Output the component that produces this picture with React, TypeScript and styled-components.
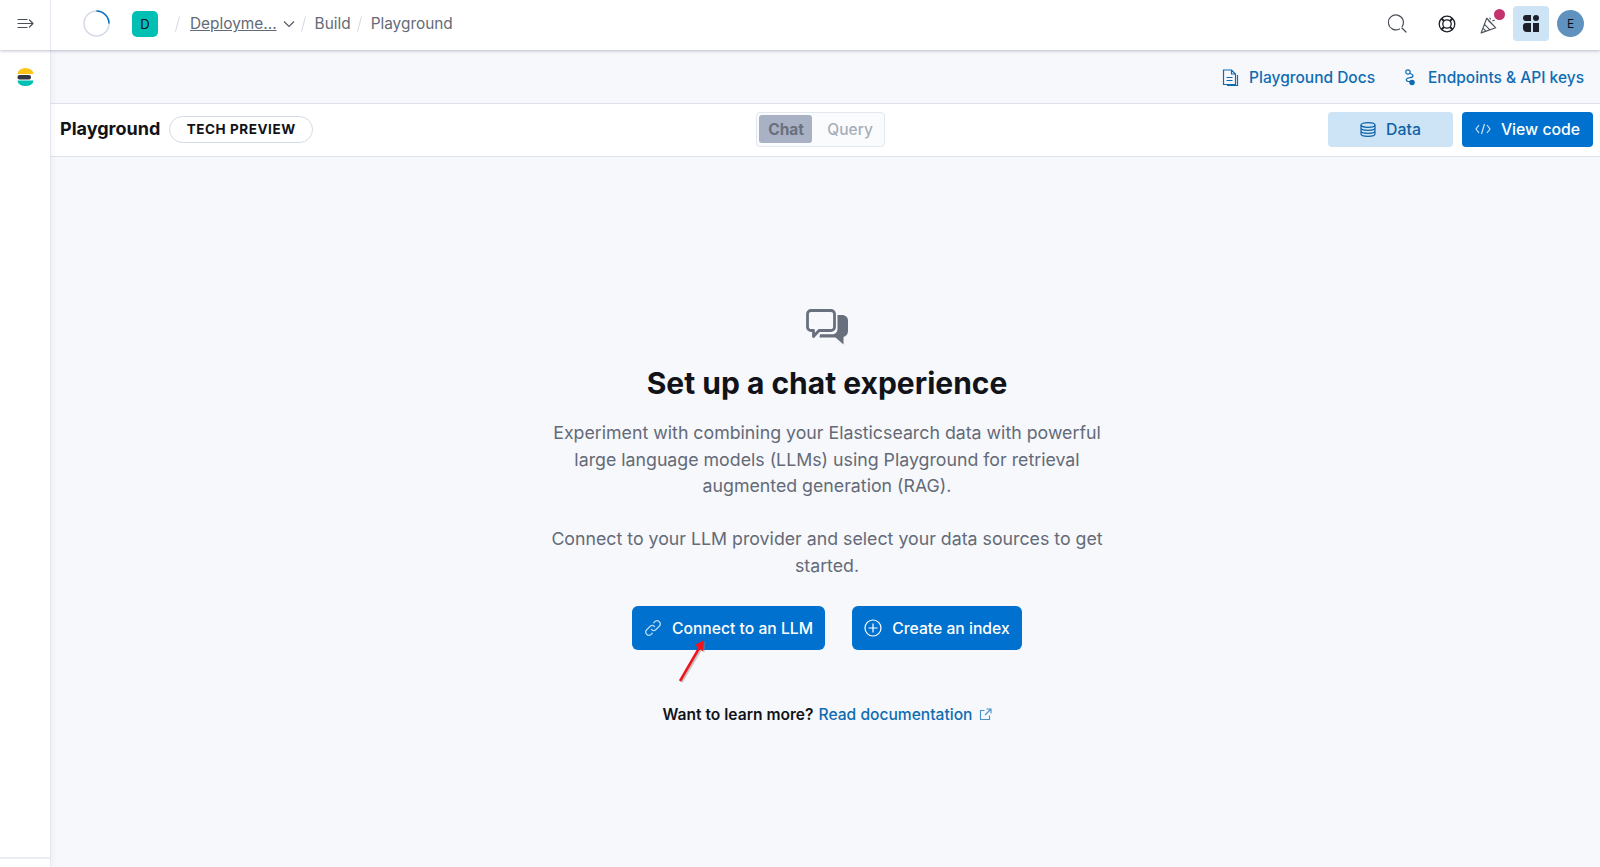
import React from "react";
import styled, { createGlobalStyle } from "styled-components";

const Global = createGlobalStyle`
  html, body { margin: 0; padding: 0; background: #f6f7fb; }
  body { font-family: Inter, "Noto Sans", sans-serif; color: #111; }
  * { box-sizing: border-box; }
`;

const Page = styled.div`
  width: 1600px; height: 867px; overflow: hidden;
  display: flex; flex-direction: column; background: #f6f8fc;
`;
const TopBar = styled.header`
  height: 50px; flex: none; display: flex; align-items: center; background: #fff; padding-bottom: 3px;
  box-shadow: 0 1px 3px rgba(70, 80, 110, .35); position: relative; z-index: 2;
`;
const MenuCell = styled.div`
  width: 51px; height: 50px; margin-bottom: -3px; padding-bottom: 3px; flex: none; display: flex; align-items: center; justify-content: center;
  border-right: 1px solid #e3e7f0; color: #4a4f5a;
`;
const Crumbs = styled.div`
  display: flex; align-items: center; padding-left: 32px; flex: 1; font-size: 15.4px; color: #69707d;
`;
const Badge = styled.div`
  width: 26px; height: 26px; border-radius: 5px; background: #00bfb3; color: #07101c;
  display: flex; align-items: center; justify-content: center; font-size: 13px; margin-left: 22px;
`;
const Slash = styled.span<{ $l: number; $r: number }>`
  width: 1px; height: 16px; background: #d3dae6; transform: rotate(15deg);
  margin: 0 ${p => p.$r}px 0 ${p => p.$l}px;
`;
const Crumb = styled.span<{ $link?: boolean }>`
  color: #646a77; text-decoration: ${p => (p.$link ? "underline" : "none")}; white-space: nowrap;
`;
const Chevron = styled.svg`
  margin-left: 6px;
`;
const RightIcons = styled.div`
  display: flex; align-items: center; padding-right: 16px;
`;
const IconSlot = styled.div<{ $w: number; $gap?: number; $active?: boolean }>`
  width: ${p => p.$w}px; height: 35px; margin-right: ${p => p.$gap || 0}px; display: flex; align-items: center; justify-content: center;
  position: relative; border-radius: 4px; background: ${p => (p.$active ? "#cce4f5" : "transparent")};
`;
const Dot = styled.span`
  position: absolute; top: 3px; right: -4px; width: 11px; height: 11px; border-radius: 50%; background: #c4316f;
`;
const Avatar = styled.div`
  width: 27px; height: 27px; border-radius: 50%; background: #6092c0; color: #07101c;
  display: flex; align-items: center; justify-content: center; font-size: 12px; margin-left: 8px;
`;
const Body = styled.div`
  flex: 1; display: flex; min-height: 0;
`;
const Side = styled.aside`
  width: 51px; flex: none; background: #fff; border-right: 1px solid #e3e7f0;
  display: flex; flex-direction: column; align-items: center; padding-top: 18px; position: relative; z-index: 1;
  box-shadow: 2px 0 6px rgba(70, 80, 110, .05);
`;
const SideFoot = styled.div`
  position: absolute; left: 0; right: 0; bottom: 8px; height: 2px; background: #e9edf3;
`;
const Main = styled.main`
  flex: 1; display: flex; flex-direction: column; min-width: 0;
`;
const SubHeader = styled.div`
  height: 53px; flex: none; display: flex; align-items: center; justify-content: flex-end; gap: 29px;
  padding: 2px 16px 0 0;
`;
const SubLink = styled.a<{ $gap: number }>`
  display: flex; align-items: center; gap: ${p => p.$gap}px; color: #0f6cb2; font-size: 15.5px; font-weight: 500;
`;
const ToolBar = styled.div`
  height: 54px; flex: none; background: #fff; border-top: 1px solid #dfe3ee; border-bottom: 1px solid #dfe3ee;
  display: grid; grid-template-columns: 696px auto 1fr; align-items: center; padding: 0 7px 1.5px 9px;
`;
const TitleRow = styled.div`
  display: flex; align-items: center; gap: 9px;
`;
const PageTitle = styled.h1`
  margin: 0; font-size: 18px; font-weight: 700; color: #111318; line-height: 24px;
`;
const Pill = styled.span`
  height: 27px; width: 144px; border: 1px solid #d3dae6; border-radius: 14px; display: flex;
  align-items: center; justify-content: center; font-size: 13.5px; font-weight: 700; letter-spacing: .55px; color: #111318;
`;
const Toggle = styled.div`
  width: 129px; height: 35px; border: 1px solid #e3e7f0; border-radius: 4px; background: #fafbfd;
  display: flex; align-items: center; padding: 2px;
`;
const ToggleBtn = styled.span<{ $on?: boolean }>`
  height: 28px; width: ${p => (p.$on ? "55px" : "72px")}; border-radius: 3px; display: flex; align-items: center; justify-content: center;
  padding-left: ${p => (p.$on ? "1px" : "6px")};
  font-size: 15.5px; font-weight: ${p => (p.$on ? 700 : 500)};
  background: ${p => (p.$on ? "#a9b2c5" : "transparent")}; color: ${p => (p.$on ? "#69707d" : "#a7adba")};
`;
const Actions = styled.div`
  display: flex; justify-content: flex-end; gap: 9px;
`;
const Btn = styled.button<{ $soft?: boolean; $w: number }>`
  width: ${p => p.$w}px; height: 35px; border: 0; border-radius: 4px; font: 500 15.8px Inter, sans-serif;
  display: flex; align-items: center; justify-content: center; gap: 10px; padding: 0;
  background: ${p => (p.$soft ? "#cce4f5" : "#0071ce")}; color: ${p => (p.$soft ? "#0f62a6" : "#fff")};
`;
const Center = styled.section`
  flex: 1; display: flex; flex-direction: column; align-items: center; padding: 152px 0 0 3px;
`;
const Heading = styled.h2`
  margin: 18px 0 0; font-size: 30px; line-height: 40px; font-weight: 700; color: #111318;
`;
const Para = styled.p<{ $top: number; $w: number }>`
  margin: ${p => p.$top}px 0 0; width: ${p => p.$w}px; text-align: center; font-size: 17.75px; line-height: 26.5px; color: #646a77;
`;
const Cta = styled.div`
  display: flex; gap: 27px; margin-top: 27px; position: relative;
`;
const CtaBtn = styled.button<{ $w: number }>`
  width: ${p => p.$w}px; height: 44px; border: 0; border-radius: 6px; background: #0071ce; color: #fff;
  font: 500 15.7px Inter, sans-serif; display: flex; align-items: center; justify-content: center; gap: 10px; padding: 0;
`;
const Arrow = styled.svg`
  position: absolute; left: 40px; top: 28px; pointer-events: none;
`;
const Learn = styled.p`
  margin: 55px 0 0; font-size: 15.6px; line-height: 19px; font-weight: 600; color: #111318; display: flex; align-items: center; gap: 5px;
`;
const DocLink = styled.a`
  color: #0f6cb2; font-weight: 500; display: flex; align-items: center; gap: 6px;
`;

const Ico = { fill: "none", stroke: "currentColor", strokeLinecap: "round", strokeLinejoin: "round" } as const;

export default function App() {
  return (
    <Page>
      <Global />
      <TopBar>
        <MenuCell>
          <svg width="17" height="13" viewBox="0 0 17 13" {...Ico} strokeWidth="1.2">
            <path d="M1 2.500h9M1 6.500h15M1 10.500h9M12.500 3l3.500 3.500-3.500 3.500" />
          </svg>
        </MenuCell>
        <Crumbs>
          <svg width="27" height="27" viewBox="0 0 27 27" fill="none">
            <circle cx="13.500" cy="13.500" r="12.500" stroke="#d3dae6" strokeWidth="1.500" />
            <path d="M13.500 1A12.500 12.500 0 0 1 26 13.500" stroke="#0071c2" strokeWidth="1.500" />
          </svg>
          <Badge>D</Badge>
          <Slash $l={19} $r={12} />
          <Crumb $link>Deployme...</Crumb>
          <Chevron width="12" height="8" viewBox="0 0 12 8" fill="none" stroke="#535966" strokeWidth="1.200">
            <path d="M1 1.500l5 5 5-5" />
          </Chevron>
          <Slash $l={8} $r={11} />
          <Crumb>Build</Crumb>
          <Slash $l={8} $r={11} />
          <Crumb>Playground</Crumb>
        </Crumbs>
        <RightIcons>
          <IconSlot $w={22} $gap={28}>
            <svg width="19" height="19" viewBox="0 0 19 19" fill="none" stroke="#4a4f5a" strokeWidth="1.200" strokeLinecap="round">
              <path d="M14.200 12.500A7.500 7.500 0 1 0 11.500 15" />
              <path d="M14 14l4 4" />
            </svg>
          </IconSlot>
          <IconSlot $w={22} $gap={21}>
            <svg width="18" height="18" viewBox="0 0 18 18" fill="none" stroke="#1d2028" strokeWidth="1.300">
              <circle cx="9" cy="9" r="7.800" />
              <circle cx="9" cy="9" r="4.200" />
              <path d="M3.500 3.500l2.500 2.500M14.500 3.500L12 6M3.500 14.500L6 12M14.500 14.500L12 12" strokeWidth="2" />
            </svg>
          </IconSlot>
          <IconSlot $w={22} $gap={12}>
            <svg width="18" height="18" viewBox="0 0 16 16" fill="none" stroke="#4a4f5a" strokeWidth="1" strokeLinejoin="round" style={{ marginTop: 3, marginRight: 2 }}>
              <path d="M6 2L1 15l13-4.500zM4 7.500l5 5M2.800 11l2.500 2.500M7.500 4l5 5M8.500 1.500l1 1.500M11 4.500l2-1" />
            </svg>
            <Dot />
          </IconSlot>
          <IconSlot $w={36} $active>
            <svg width="16" height="17" viewBox="0 0 16 17" fill="#1d2028">
              <circle cx="13" cy="3" r="3" />
              <path d="M3 0h5v6H3a3 3 0 0 1 0-6z" />
              <path d="M0 11a3 3 0 0 1 3-3h5v9H4a4 4 0 0 1-4-4z" />
              <path d="M10 8h6v9h-6z" />
            </svg>
          </IconSlot>
          <Avatar>E</Avatar>
        </RightIcons>
      </TopBar>
      <Body>
        <Side>
          <svg width="17" height="18" viewBox="0 0 17 18">
            <path d="M0.500 6A8 6 0 0 1 16.500 6z" fill="#fec514" />
            <rect x="0.500" y="7" width="13.500" height="4.500" rx="2" fill="#343741" />
            <path d="M0.500 12.500h16A8 5.500 0 0 1 0.500 12.500z" fill="#00bfb3" />
          </svg>
          <SideFoot />
        </Side>
        <Main>
          <SubHeader>
            <SubLink $gap={10}>
              <svg width="17" height="17" viewBox="0 0 17 17" fill="none" stroke="#0f6cb2" strokeWidth="1.200">
                <path d="M1.500 1h8l4 4v10.500h-12zM9.500 1v4h4M4.500 8.500h6M4.500 11.500h6M15.500 6v10.500H5" />
              </svg>
              Playground Docs
            </SubLink>
            <SubLink $gap={13}>
              <svg width="11" height="17" viewBox="0 0 11 17" fill="none" stroke="#0f6cb2" strokeWidth="1.200">
                <circle cx="4" cy="3" r="2.200" />
                <path d="M6 4.500c4 1 4 3.500 0 4.200S1 11 4 12.500h2" />
                <circle cx="8" cy="13.500" r="2.200" fill="#0f6cb2" />
              </svg>
              Endpoints &amp; API keys
            </SubLink>
          </SubHeader>
          <ToolBar>
            <TitleRow>
              <PageTitle>Playground</PageTitle>
              <Pill>TECH PREVIEW</Pill>
            </TitleRow>
            <Toggle>
              <ToggleBtn $on>Chat</ToggleBtn>
              <ToggleBtn>Query</ToggleBtn>
            </Toggle>
            <Actions>
              <Btn $soft $w={125}>
                <svg width="16" height="15" viewBox="0 0 16 15" fill="none" stroke="#0f62a6" strokeWidth="1.200">
                  <ellipse cx="8" cy="3" rx="7" ry="2.300" />
                  <path d="M1 3v9c0 1.300 3 2.300 7 2.300s7-1 7-2.300V3M1 6c0 1.300 3 2.300 7 2.300S15 7.300 15 6M1 9c0 1.300 3 2.300 7 2.300S15 10.300 15 9" />
                </svg>
                Data
              </Btn>
              <Btn $w={131}>
                <svg width="16" height="12" viewBox="0 0 16 12" fill="none" stroke="#cce4f5" strokeWidth="1.200">
                  <path d="M4 2L1 6l3 4M12 2l3 4-3 4M9.500 1L6.500 11" />
                </svg>
                View code
              </Btn>
            </Actions>
          </ToolBar>
          <Center>
            <svg width="43" height="36" viewBox="0 0 43 36" fill="none">
              <path d="M31.500 6H36c3.500 0 6 2.300 6 5.500V22c0 3-1.500 5-4.500 6v7.500L29.500 28.500H13.500l.5-3.200H26c3.300 0 5.500-2.200 5.500-5.300z" fill="#69707d" />
              <path d="M5 1.500h20A3.500 3.500 0 0 1 28.500 5v13a3.500 3.500 0 0 1-3.500 3.500H13l-5.500 6v-6H5A3.500 3.500 0 0 1 1.500 18V5A3.500 3.500 0 0 1 5 1.500z" stroke="#69707d" strokeWidth="2.800" strokeLinejoin="round" />
            </svg>
            <Heading>Set up a chat experience</Heading>
            <Para $top={17} $w={560}>
              Experiment with combining your Elasticsearch data with powerful large language models (LLMs) using Playground for retrieval augmented generation (RAG).
            </Para>
            <Para $top={26.5} $w={565}>
              Connect to your LLM provider and select your data sources to get started.
            </Para>
            <Cta>
              <CtaBtn $w={193}>
                <svg width="18" height="18" viewBox="0 0 18 18" fill="none" stroke="#b5d8f2" strokeWidth="1.300" strokeLinecap="round">
                  <path d="M7.500 10.500a3.200 3.200 0 0 0 4.500 0l3.500-3.500a3.200 3.200 0 0 0-4.500-4.500L9.800 3.700" />
                  <path d="M10.500 7.500a3.200 3.200 0 0 0-4.500 0L2.500 11a3.200 3.200 0 0 0 4.500 4.500l1.200-1.200" />
                </svg>
                Connect to an LLM
              </CtaBtn>
              <CtaBtn $w={170}>
                <svg width="18" height="18" viewBox="0 0 18 18" fill="none" stroke="#fff" strokeWidth="1.200">
                  <circle cx="9" cy="9" r="8" />
                  <path d="M9 4.500v9M4.500 9h9" />
                </svg>
                Create an index
              </CtaBtn>
              <Arrow width="40" height="54" viewBox="0 0 40 54">
                <path d="M9.500 48L29 15" stroke="#8a8a8a" strokeOpacity=".45" strokeWidth="2.500" />
                <path d="M24.500 12.500L33.500 7l-1 11.500z" fill="#8a8a8a" fillOpacity=".45" />
                <path d="M8 47L27.500 13.500" stroke="#f0141c" strokeWidth="2.500" />
                <path d="M23 11l9-5-1 11.500z" fill="#f0141c" />
              </Arrow>
            </Cta>
            <Learn>
              Want to learn more?
              <DocLink>
                Read documentation
                <svg width="13" height="13" viewBox="0 0 13 13" fill="none" stroke="#4a90c9" strokeWidth="1.100">
                  <path d="M5.500 2.500H1.500v9h9v-4M7.500 1h4.500v4.500M12 1L6 7" />
                </svg>
              </DocLink>
            </Learn>
          </Center>
        </Main>
      </Body>
    </Page>
  );
}
